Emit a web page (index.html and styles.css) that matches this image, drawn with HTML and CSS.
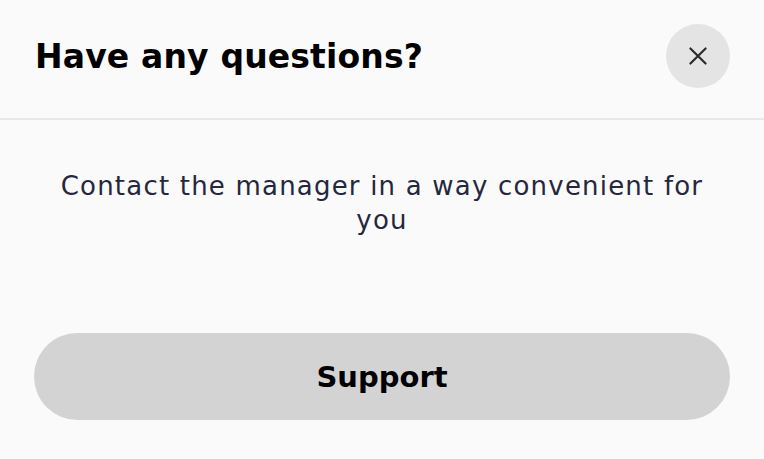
FILE: index.html
```html
<!DOCTYPE html>
<html lang="en">
<head>
<meta charset="utf-8">
<link rel="stylesheet" href="styles.css">
</head>
<body>
<div class="modal">
  <header class="modal-header">
    <h2 class="title">Have any questions?</h2>
    <button class="close" aria-label="Close">
      <svg width="26" height="26" viewBox="0 0 24 24" fill="none" stroke="#2b2b2b" stroke-width="2" stroke-linecap="round"><path d="M5 5L19 19M19 5L5 19"/></svg>
    </button>
  </header>
  <div class="modal-body">
    <p class="desc">Contact the manager in a way convenient for you</p>
    <button class="support">Support</button>
  </div>
</div>
</body>
</html>
```
FILE: styles.css
```css
html, body {
  margin: 0;
  padding: 0;
  background: #fafafa;
}
body {
  font-family: "DejaVu Sans", "Noto Sans", sans-serif;
  width: 764px;
  height: 459px;
  overflow: hidden;
}
.modal {
  display: flex;
  flex-direction: column;
}
.modal-header {
  display: flex;
  align-items: center;
  justify-content: space-between;
  padding: 24px 34px 30px 35px;
  border-bottom: 2px solid #e8e8e8;
}
.title {
  margin: 0;
  font-size: 33px;
  font-weight: 700;
  color: #000;
  letter-spacing: 0.15px;
}
.close {
  width: 64px;
  height: 64px;
  border-radius: 50%;
  border: none;
  background: #e4e4e4;
  display: flex;
  align-items: center;
  justify-content: center;
  padding: 0;
}
.modal-body {
  display: flex;
  flex-direction: column;
  align-items: center;
  padding: 49px 34px 0;
}
.desc {
  margin: 0;
  width: 672px;
  text-align: center;
  font-size: 26px;
  letter-spacing: 1.2px;
  line-height: 34px;
  color: #25283d;
}
.support {
  margin-top: 96px;
  width: 696px;
  height: 87px;
  border: none;
  border-radius: 44px;
  background: #d3d3d3;
  font-family: inherit;
  font-size: 29px;
  font-weight: 700;
  color: #000;
}
```
